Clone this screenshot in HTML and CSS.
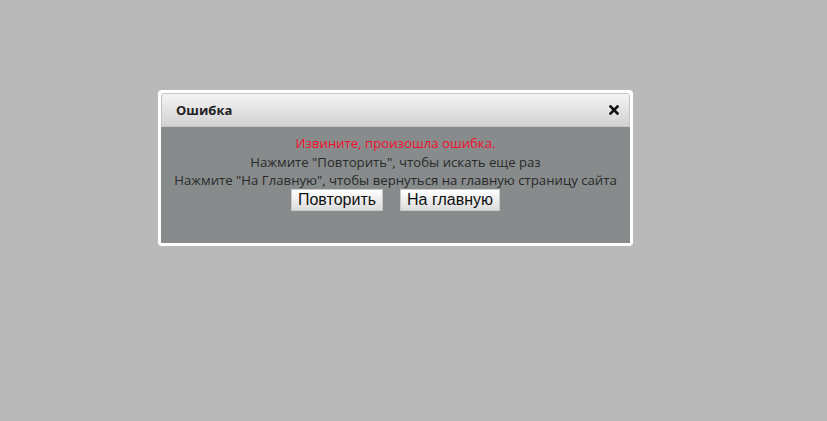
FILE: index.html
```html
<!DOCTYPE html>
<html>
<head>
<meta charset="utf-8">
<link rel="stylesheet" href="styles.css">
</head>
<body>
<div class="dialog">
  <div class="titlebar">
    <span class="title">Ошибка</span>
    <span class="close" aria-label="close">
      <svg width="10" height="10" viewBox="0 0 10 10"><path d="M1.5 1.5 L8.5 8.5 M8.5 1.5 L1.5 8.5" stroke="#111" stroke-width="2.6" stroke-linecap="square"/></svg>
    </span>
  </div>
  <div class="content">
    <div class="msg red">Извините, произошла ошибка.</div>
    <div class="msg">Нажмите "Повторить", чтобы искать еще раз</div>
    <div class="msg">Нажмите "На Главную", чтобы вернуться на главную страницу сайта</div>
    <div class="buttons">
      <button class="btn">Повторить</button>
      <button class="btn">На главную</button>
    </div>
  </div>
</div>
</body>
</html>
```
FILE: styles.css
```css
html, body {
  margin: 0;
  padding: 0;
  background: #b9b9b9;
  height: 100%;
}
body {
  padding: 90px 0 0 158px;
  box-sizing: border-box;
  font-family: "Open Sans", "Noto Sans", sans-serif;
}
.dialog {
  width: 475px;
  box-sizing: border-box;
  background: #fff;
  border: 3px solid #fff;
  border-radius: 4px;
}
.titlebar {
  height: 34px;
  box-sizing: border-box;
  border: 1px solid #c4c4c4;
  border-radius: 3px 3px 0 0;
  background: linear-gradient(#f4f4f4, #d2d2d2);
  display: flex;
  align-items: center;
  justify-content: space-between;
  padding: 0 10px 0 14px;
}
.title {
  font-size: 13px;
  font-weight: bold;
  color: #222;
}
.close {
  display: flex;
  width: 10px;
  height: 10px;
}
.content {
  background: #878b8c;
  height: 116px;
  padding-top: 7px;
  box-sizing: border-box;
  text-align: center;
  color: #2a2a2a;
  font-size: 13.2px;
}
.msg {
  line-height: 18.5px;
}
.red {
  color: #f2102b;
}
.buttons {
  display: flex;
  justify-content: center;
  gap: 17px;
  margin-top: -1px;
}
.btn {
  font-family: "Liberation Sans", Arial, sans-serif;
  font-size: 16px;
  color: #111;
  height: 22px;
  padding: 0 6px;
  border: 1px solid #c8c8c8;
  background: linear-gradient(#ffffff, #dcdcdc);
  border-radius: 0;
  line-height: 20px;
}
```
